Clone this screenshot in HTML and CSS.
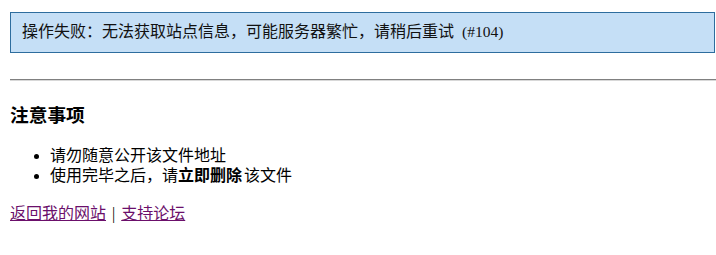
FILE: index.html
```html
<!DOCTYPE html>
<html lang="zh-CN">
<head>
<meta charset="utf-8">
<title>操作失败</title>
<link rel="stylesheet" href="styles.css">
</head>
<body>
<div class="page">
  <div class="alert">操作失败：无法获取站点信息，可能服务器繁忙，请稍后重试 <span class="code">(#104)</span></div>
  <hr class="rule">
  <h3 class="title">注意事项</h3>
  <ul class="notes">
    <li>请勿随意公开该文件地址</li>
    <li>使用完毕之后，请<strong class="strong">立即删除</strong>该文件</li>
  </ul>
  <p class="links"><a class="link" href="#home">返回我的网站</a> <span class="sep">|</span> <a class="link" href="#forum">支持论坛</a></p>
</div>
</body>
</html>
```
FILE: styles.css
```css
html, body {
  margin: 0;
  padding: 0;
  background: #ffffff;
}
body {
  font-family: "Liberation Serif", "Noto Sans CJK SC", serif;
  font-size: 16px;
  color: #000000;
}
.page {
  padding: 12px 1px 0 10px;
}
.alert {
  border: 1px solid #2d6d9e;
  background: #c5dff6;
  padding: 9px 11px 10px;
  line-height: 20px;
  color: #111111;
}
.code {
  font-size: 15.5px;
  margin-left: 4px;
}
.rule {
  margin: 26px -1px 0 0;
  border: 0;
  border-top: 1px solid #808080;
  border-bottom: 1px solid #d8d8d8;
  height: 0;
}
.title {
  margin: 24px 0 0;
  font-size: 18.72px;
  line-height: 22px;
  font-weight: bold;
}
.notes {
  margin: 19px 0 0;
  padding-left: 40px;
  line-height: 20px;
}
.notes li {
  line-height: 20px;
}
.strong {
  margin-right: 2px;
}
.links {
  margin: 18px 0 0;
  line-height: 20px;
}
.sep {
  margin: 0 2px;
}
.link {
  color: #6b0f6b;
  text-decoration: underline;
}
```
